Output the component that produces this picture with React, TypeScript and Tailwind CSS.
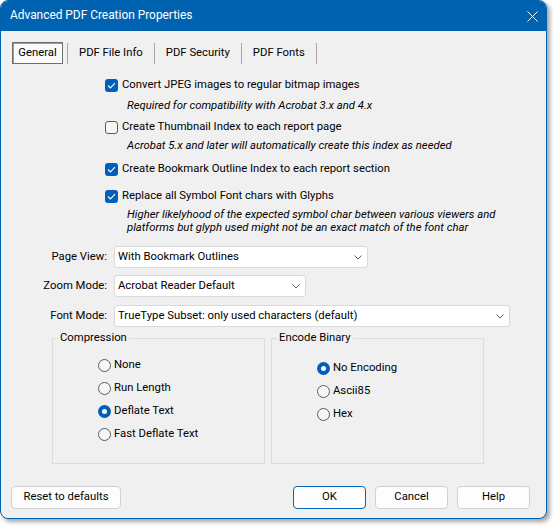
import React from "react";

function CheckBox({ checked }: { checked: boolean }) {
  if (checked) {
    return (
      <span className="w-[13px] h-[13px] shrink-0 rounded-[3px] bg-[#005fb8] flex items-center justify-center">
        <svg width="9" height="7" viewBox="0 0 9 7">
          <path d="M1 3.5 L3.4 5.9 L8 1.2" fill="none" stroke="white" strokeWidth="1.1" />
        </svg>
      </span>
    );
  }
  return <span className="w-[13px] h-[13px] shrink-0 rounded-[3px] border border-[#5c5c5c] bg-[#f6f6f6]" />;
}

function Radio({ checked }: { checked: boolean }) {
  if (checked) {
    return (
      <span className="w-[13px] h-[13px] shrink-0 rounded-full bg-[#005fb8] flex items-center justify-center">
        <span className="w-[5px] h-[5px] rounded-full bg-white" />
      </span>
    );
  }
  return <span className="w-[13px] h-[13px] shrink-0 rounded-full border border-[#5c5c5c] bg-[#f6f6f6]" />;
}

function Combo({ value, width }: { value: string; width: string }) {
  return (
    <div className={`${width} h-[22px] ml-[7px] bg-white border border-[#d9d9d9] rounded-[3px] flex items-center justify-between pl-[3px] pr-[5px]`}>
      <span>{value}</span>
      <svg width="8" height="5" viewBox="0 0 8 5">
        <path d="M0.5 0.5 L4 4 L7.5 0.5" fill="none" stroke="#5f5f5f" strokeWidth="1" />
      </svg>
    </div>
  );
}

function Option({ label, checked, top }: { label: string; checked: boolean; top: string }) {
  return (
    <div className={`${top} h-[17px] flex items-center gap-[4px]`}>
      <CheckBox checked={checked} />
      <span>{label}</span>
    </div>
  );
}

const compression = ["None", "Run Length", "Deflate Text", "Fast Deflate Text"];
const encoding = ["No Encoding", "Ascii85", "Hex"];

export default function App() {
  return (
    <div className="w-[555px] h-[527px] bg-white [font-family:'Segoe_UI',Roboto,sans-serif] text-[11.3px] text-black">
      <div className="w-[547px] h-[519px] rounded-[8px] border border-[#0063b1] bg-[#f0f0f0] overflow-hidden flex flex-col shadow-[3px_3px_4px_rgba(0,0,0,0.35)]">
        {/* title bar */}
        <div className="h-[30px] bg-[#0063b1] flex items-center justify-between pl-[9px] pr-[8px] text-white text-[11.9px]">
          <span>Advanced PDF Creation Properties</span>
          <svg width="11" height="11" viewBox="0 0 11 11">
            <path d="M0.5 0.5 L10.5 10.5 M10.5 0.5 L0.5 10.5" stroke="white" strokeWidth="1" />
          </svg>
        </div>

        {/* tabs */}
        <div className="mt-[11px] ml-[11px] h-[22px] flex items-center">
          <div className="w-[51px] h-[22px] border border-[#6e6e6e] shadow-[inset_1px_1px_0_#9a9a9a,inset_-1px_-1px_0_#ffffff] bg-[#fafafa] flex items-center justify-center">
            General
          </div>
          <span className="ml-[4px] w-px h-[21px] bg-[#a6a6a6]" />
          <span className="px-[11px]">PDF File Info</span>
          <span className="w-px h-[21px] bg-[#a6a6a6]" />
          <span className="px-[11px]">PDF Security</span>
          <span className="w-px h-[21px] bg-[#a6a6a6]" />
          <span className="px-[11px]">PDF Fonts</span>
          <span className="w-px h-[21px] bg-[#a6a6a6]" />
        </div>

        {/* options */}
        <div className="ml-[104px] flex flex-col">
          <Option top="mt-[13px]" checked label="Convert JPEG images to regular bitmap images" />
          <div className="mt-[4px] ml-[22px] h-[16px] leading-[16px] italic">Required for compatibility with Acrobat 3.x and 4.x</div>
          <Option top="mt-[5px]" checked={false} label="Create Thumbnail Index to each report page" />
          <div className="mt-[2px] ml-[22px] h-[16px] leading-[16px] italic">
            Acrobat 5.x and later will automatically create this index as needed
          </div>
          <Option top="mt-[7px]" checked label="Create Bookmark Outline Index to each report section" />
          <Option top="mt-[10px]" checked label="Replace all Symbol Font chars with Glyphs" />
          <div className="mt-[3px] ml-[22px] leading-[13px] italic">
            Higher likelyhood of the expected symbol char between various viewers and
            <br />
            platforms but glyph used might not be an exact match of the font char
          </div>
        </div>

        {/* combos */}
        <div className="mt-[12px] flex items-center">
          <span className="w-[106px] text-right">Page View:</span>
          <Combo width="w-[254px]" value="With Bookmark Outlines" />
        </div>
        <div className="mt-[7px] flex items-center">
          <span className="w-[106px] text-right">Zoom Mode:</span>
          <Combo width="w-[192px]" value="Acrobat Reader Default" />
        </div>
        <div className="mt-[8px] flex items-center">
          <span className="w-[106px] text-right">Font Mode:</span>
          <Combo width="w-[396px]" value="TrueType Subset: only used characters (default)" />
        </div>

        {/* groups */}
        <div className="mt-[3px] ml-[51px] flex gap-[6px]">
          <fieldset className="w-[213px] h-[134px] border border-[#dcdcdc]">
            <legend className="ml-[5px] px-[2px] leading-[16px]">Compression</legend>
            <div className="pl-[45px] pt-[11px] flex flex-col gap-[6px]">
              {compression.map((c) => (
                <div key={c} className="h-[17px] flex items-center gap-[3px]">
                  <Radio checked={c === "Deflate Text"} />
                  <span>{c}</span>
                </div>
              ))}
            </div>
          </fieldset>
          <fieldset className="w-[213px] h-[134px] border border-[#dcdcdc]">
            <legend className="ml-[5px] px-[2px] leading-[16px]">Encode Binary</legend>
            <div className="pl-[45px] pt-[14px] flex flex-col gap-[6px]">
              {encoding.map((e) => (
                <div key={e} className="h-[17px] flex items-center gap-[3px]">
                  <Radio checked={e === "No Encoding"} />
                  <span>{e}</span>
                </div>
              ))}
            </div>
          </fieldset>
        </div>

        {/* buttons */}
        <div className="mt-[22px] ml-[10px] mr-[16px] flex items-center">
          <button className="w-[110px] h-[23px] rounded-[4px] border border-[#d0d0d0] bg-[#fdfdfd]">Reset to defaults</button>
          <div className="flex-1" />
          <button className="w-[73px] h-[23px] rounded-[4px] border border-[#0067c0] bg-[#fdfdfd]">OK</button>
          <button className="ml-[9px] w-[73px] h-[23px] rounded-[4px] border border-[#d0d0d0] bg-[#fdfdfd]">Cancel</button>
          <button className="ml-[9px] w-[73px] h-[23px] rounded-[4px] border border-[#d0d0d0] bg-[#fdfdfd]">Help</button>
        </div>
      </div>
    </div>
  );
}
